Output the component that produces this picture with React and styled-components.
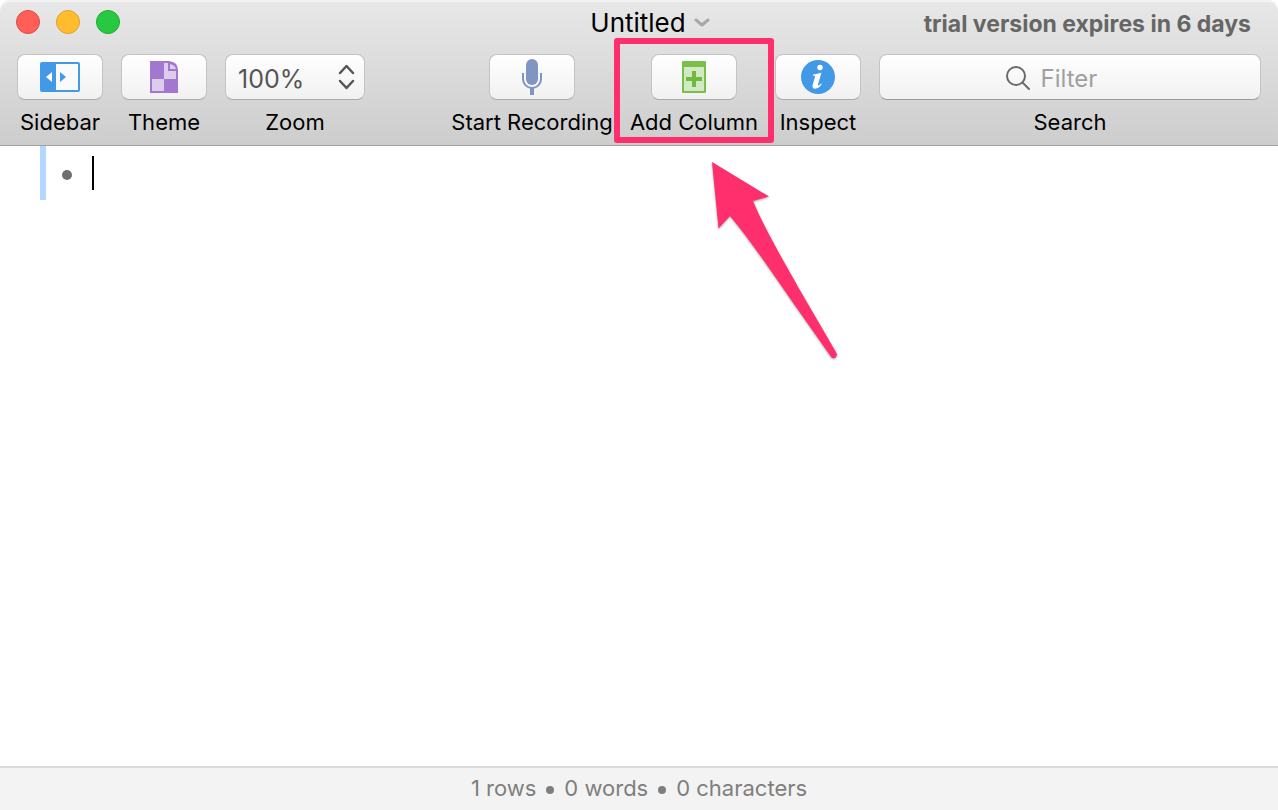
import React from 'react';
import styled, { createGlobalStyle } from 'styled-components';

const GlobalStyle = createGlobalStyle`
  *, *::before, *::after { box-sizing: border-box; }
  body {
    margin: 0;
    background: #fff;
    color: #000;
    font-family: Inter, Roboto, "Liberation Sans", sans-serif;
    font-size: 22px;
  }
`;

const Window = styled.div`
  min-height: 100vh;
  display: flex;
  flex-direction: column;
`;

const Header = styled.header`
  height: 146px;
  border-bottom: 1px solid #a3a3a3;
  border-radius: 10px 10px 0 0;
  background: linear-gradient(#e8e8e8, #cdcdcd);
  box-shadow: inset 0 2px 0 #f3f3f3;
`;

const TitleBar = styled.div`
  height: 54px;
  padding-bottom: 10px;
  display: grid;
  grid-template-columns: 1fr auto 1fr;
  align-items: center;
`;

const Lights = styled.div`
  display: flex;
  gap: 16px;
  padding-left: 16px;
`;

const Light = styled.button`
  width: 24px;
  height: 24px;
  padding: 0;
  border-radius: 50%;
  border: 1px solid ${(p) => p.$edge};
  background: ${(p) => p.$fill};
`;

const Title = styled.h1`
  margin: 0;
  padding-top: 2px;
  padding-left: 22px;
  display: flex;
  align-items: center;
  gap: 8px;
  font-size: 26px;
  font-weight: 400;
  line-height: 32px;
`;

const Trial = styled.span`
  justify-self: end;
  padding-top: 4px;
  padding-right: 27px;
  color: #666;
  font-size: 23px;
  font-weight: 700;
  line-height: 32px;
  white-space: nowrap;
`;

const Toolbar = styled.div`
  display: flex;
  align-items: flex-start;
  gap: 18px;
  padding: 0 17px;
`;

const Item = styled.div`
  position: relative;
  flex: 0 0 ${(p) => p.$width}px;
  min-width: 0;
  display: flex;
  flex-direction: column;
  align-items: center;
  gap: 8px;
`;

const Spacer = styled.div`
  flex: 1;
`;

const Caption = styled.label`
  line-height: 28px;
  font-size: 22px;
  white-space: nowrap;
`;

const ToolButton = styled.button`
  width: 86px;
  height: 46px;
  padding: 0;
  display: flex;
  align-items: center;
  justify-content: center;
  border: 1px solid #c4c4c4;
  border-bottom-color: #aaa;
  border-radius: 8px;
  background: linear-gradient(#fff, #f1f1f1);
`;

const SelectBox = styled.div`
  width: 100%;
  height: 46px;
  display: grid;
  align-items: center;
  border: 1px solid #c4c4c4;
  border-bottom-color: #aaa;
  border-radius: 8px;
  background: linear-gradient(#fff, #f1f1f1);

  > * { grid-area: 1 / 1; }
  > svg { justify-self: end; margin-right: 8px; pointer-events: none; }
`;

const Select = styled.select`
  appearance: none;
  width: 100%;
  height: 44px;
  padding: 4px 12px 0;
  border: 0;
  background: transparent;
  color: #555;
  font: 400 25px Inter, sans-serif;
`;

const SearchBox = styled.div`
  width: 100%;
  height: 46px;
  padding-top: 2px;
  display: flex;
  align-items: center;
  justify-content: center;
  gap: 11px;
  border: 1px solid #c4c4c4;
  border-bottom-color: #999;
  border-radius: 8px;
  background: linear-gradient(#fff, #f1f1f1);
`;

const SearchInput = styled.input`
  width: 94px;
  padding: 0;
  border: 0;
  outline: 0;
  background: transparent;
  font: 400 24px Inter, sans-serif;
  color: #333;
  &::placeholder { color: #a0a0a0; opacity: 1; }
`;

const Highlight = styled.div`
  position: absolute;
  inset: -16px -17px -7px;
  border: 6px solid #ff2f6d;
  border-radius: 3px;
  pointer-events: none;
`;

const Arrow = styled.svg`
  position: absolute;
  top: 96px;
  left: 60px;
  filter: drop-shadow(0 1px 1px rgba(0, 0, 0, 0.35));
  pointer-events: none;
`;

const Outline = styled.main`
  flex: 1;
  padding-left: 40px;
`;

const Row = styled.div`
  height: 54px;
  display: flex;
  align-items: center;
  border-left: 6px solid #b3d8ff;
  padding-left: 16px;
`;

const Bullet = styled.span`
  width: 10px;
  height: 10px;
  margin-top: 4px;
  margin-right: 20px;
  border-radius: 50%;
  background: #6f6f6f;
`;

const Caret = styled.span`
  width: 2px;
  height: 34px;
  background: #000;
`;

const RowText = styled.input`
  flex: 1;
  border: 0;
  outline: 0;
  font: 400 26px Inter, sans-serif;
`;

const Status = styled.footer`
  height: 44px;
  padding-bottom: 2px;
  display: flex;
  align-items: center;
  justify-content: center;
  gap: 10px;
  border-top: 2px solid #dadada;
  background: #f3f3f3;
  color: #7f7f7f;
  line-height: 28px;
`;

const Dot = styled.span`
  width: 8px;
  height: 8px;
  margin-top: 4px;
  border-radius: 50%;
  background: #7f7f7f;
`;

const SidebarIcon = () => (
  <svg width="40" height="30" viewBox="0 0 40 30">
    <rect x="1" y="1" width="38" height="28" rx="1" fill="#fafafa" stroke="#4299e6" strokeWidth="2" />
    <path d="M1 1h15v28H1z" fill="#4299e6" />
    <path d="M12 10v10l-6-5z" fill="#fff" />
    <path d="M20 10v10l6-5z" fill="#4299e6" />
  </svg>
);

const ThemeIcon = () => (
  <svg width="28" height="32" viewBox="0 0 28 32">
    <path d="M0 0h19q9 1 9 9v23H0z" fill="#a377cf" />
    <path d="M14 2h4v8h8v8H14zM2 18h12v12H2z" fill="#ddcdec" />
    <path d="M20 3q5 1 6 5h-6z" fill="#ddcdec" />
  </svg>
);

const StepperIcon = () => (
  <svg width="18" height="26" viewBox="0 0 18 26" fill="none" stroke="#555" strokeWidth="2.5" strokeLinecap="round" strokeLinejoin="round">
    <path d="M2 9l6.500-7 6.500 7M2 17l6.500 7 6.500-7" />
  </svg>
);

const MicIcon = () => (
  <svg width="20" height="36" viewBox="0 0 20 36">
    <rect x="4" y="0" width="12" height="26" rx="6" fill="#8095c1" />
    <path d="M1 14v6a9 9 0 0 0 18 0v-6" fill="none" stroke="#8095c1" strokeWidth="2" />
    <path d="M8 28h4v8H8z" fill="#8095c1" />
  </svg>
);

const ColumnIcon = () => (
  <svg width="24" height="32" viewBox="0 0 24 32">
    <rect width="24" height="32" rx="1" fill="#79c047" />
    <path d="M2 6h20v24H2z" fill="#d2e9c4" />
    <path d="M12 10v16M4 18h16" stroke="#70b93f" strokeWidth="4" />
  </svg>
);

const InfoIcon = () => (
  <svg width="34" height="34" viewBox="0 0 34 34">
    <circle cx="17" cy="17" r="17" fill="#4299e6" />
    <circle cx="19" cy="7.5" r="2.7" fill="#fff" />
    <path d="M12 14.6c3-.3 5.500-1.200 8.400-1.900L17 24.500c-.5 2 1.300 1 3-1l.8.6c-2 3-4 4.600-6.500 4.600-2.400 0-3.300-1.600-2.600-4l2.200-7.500c.4-1.300-.3-1.600-2.200-1.700z" fill="#fff" />
  </svg>
);

const SearchIcon = () => (
  <svg width="24" height="24" viewBox="0 0 24 24" fill="none" stroke="#6b6b6b" strokeWidth="2" strokeLinecap="round">
    <circle cx="10" cy="10" r="9" />
    <path d="M17 17l6 6" />
  </svg>
);

const Tool = ({ id, label, width = 86, icon, children }) => (
  <Item $width={width}>
    <ToolButton id={id} type="button">{icon}</ToolButton>
    <Caption htmlFor={id}>{label}</Caption>
    {children}
  </Item>
);

export default function App() {
  return (
    <Window>
      <GlobalStyle />
      <Header>
        <TitleBar>
          <Lights>
            <Light aria-label="Close" $fill="#ff5f57" $edge="#e2463f" />
            <Light aria-label="Minimize" $fill="#ffbd2e" $edge="#e0a028" />
            <Light aria-label="Full screen" $fill="#28c940" $edge="#1bab2d" />
          </Lights>
          <Title>
            Untitled
            <svg width="16" height="10" viewBox="0 0 16 10" fill="none" stroke="#a8a8a8" strokeWidth="3" strokeLinecap="round" strokeLinejoin="round">
              <path d="M2 2l6 5 6-5" />
            </svg>
          </Title>
          <Trial>trial version expires in 6 days</Trial>
        </TitleBar>
        <Toolbar>
          <Tool id="sidebar" label="Sidebar" icon={<SidebarIcon />} />
          <Tool id="theme" label="Theme" icon={<ThemeIcon />} />
          <Item $width={140}>
            <SelectBox>
              <Select id="zoom" defaultValue="100%">
                <option>100%</option>
              </Select>
              <StepperIcon />
            </SelectBox>
            <Caption htmlFor="zoom">Zoom</Caption>
          </Item>
          <Spacer />
          <Tool id="record" label="Start Recording" width={162} icon={<MicIcon />} />
          <Tool id="column" label="Add Column" width={126} icon={<ColumnIcon />}>
            <Highlight />
            <Arrow width="160" height="220" viewBox="0 0 160 220">
              <path
                d="M21 12L78 46.500 62 51C75 82 99 122 110 142L145.500 203C147 206.500 143.500 209.500 140.500 207.500L105 157C84 127 60 91 39 66L27.500 78.500z"
                fill="#ff2f6d"
              />
            </Arrow>
          </Tool>
          <Tool id="inspect" label="Inspect" icon={<InfoIcon />} />
          <Item $width={382}>
            <SearchBox>
              <SearchIcon />
              <SearchInput id="search" type="text" placeholder="Filter" />
            </SearchBox>
            <Caption htmlFor="search">Search</Caption>
          </Item>
        </Toolbar>
      </Header>
      <Outline>
        <Row>
          <Bullet />
          <Caret />
          <RowText aria-label="Row text" />
        </Row>
      </Outline>
      <Status>
        <span>1 rows</span>
        <Dot />
        <span>0 words</span>
        <Dot />
        <span>0 characters</span>
      </Status>
    </Window>
  );
}
